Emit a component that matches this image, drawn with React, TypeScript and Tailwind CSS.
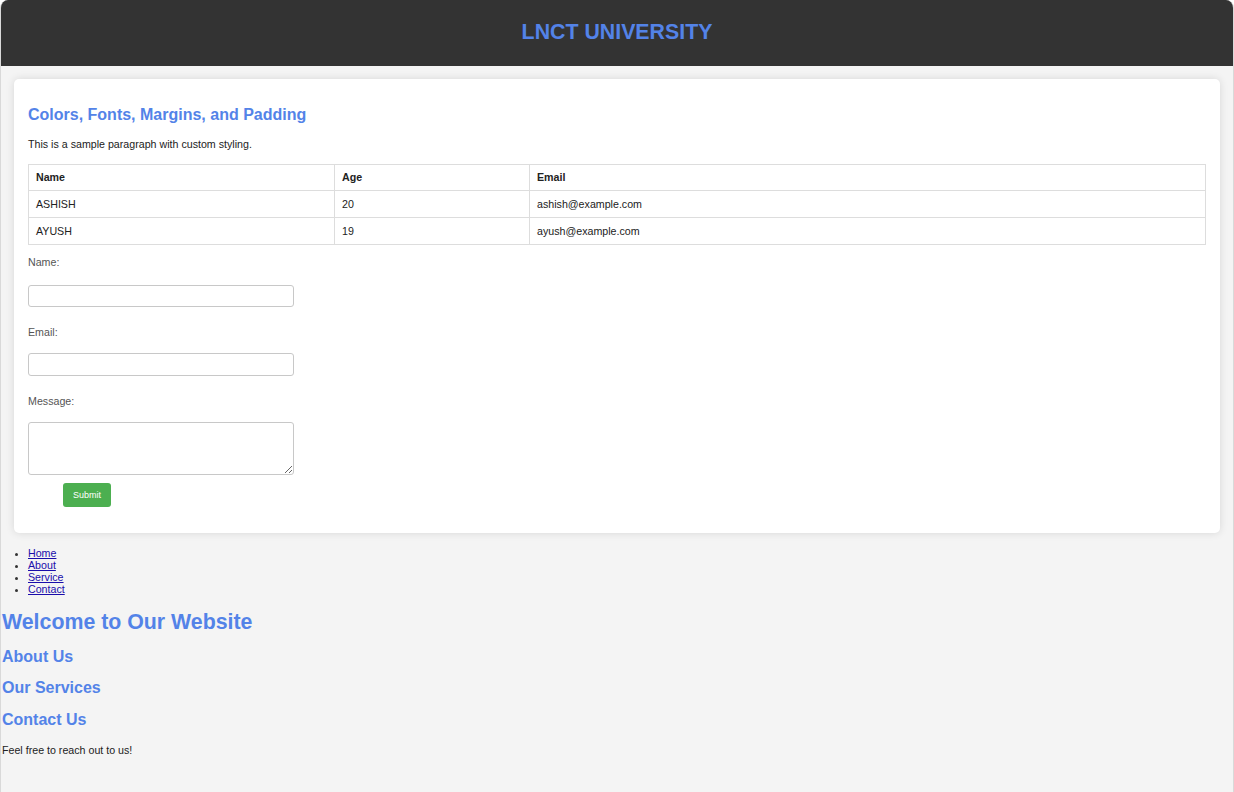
import React from "react";

const rows = [
  { name: "ASHISH", age: 20, email: "ashish@example.com" },
  { name: "AYUSH", age: 19, email: "ayush@example.com" },
];

const links = ["Home", "About", "Service", "Contact"];

export default function App() {
  return (
    <div
      className="min-h-[792px] bg-[#f4f4f4] border-x border-[#d9d9d9] rounded-t-[8px] overflow-hidden text-[10.67px] leading-[13px] text-[#222]"
      style={{ fontFamily: '"Liberation Sans", Arial, sans-serif' }}
    >
      <header className="h-[66px] bg-[#333333] flex items-center justify-center">
        <h1 className="text-[21.33px] leading-[24px] font-bold text-[#5383e8] -mt-[3px]">LNCT UNIVERSITY</h1>
      </header>

      <main className="mx-[13px] mt-[13px] bg-white rounded-[5px] shadow-[0_0_8px_rgba(0,0,0,0.12)] px-[14px] pt-[26px] pb-[26px]">
        <h2 className="text-[16px] leading-[19px] font-bold text-[#5383e8]">Colors, Fonts, Margins, and Padding</h2>
        <p className="mt-[14px]">This is a sample paragraph with custom styling.</p>

        <table className="mt-[13px] w-full border-collapse text-[#222]">
          <thead>
            <tr>
              <th className="w-[306px] border border-[#dddddd] px-[7px] py-[6px] text-left font-bold">Name</th>
              <th className="w-[195px] border border-[#dddddd] px-[7px] py-[6px] text-left font-bold">Age</th>
              <th className="border border-[#dddddd] px-[7px] py-[6px] text-left font-bold">Email</th>
            </tr>
          </thead>
          <tbody>
            {rows.map((r) => (
              <tr key={r.name}>
                <td className="border border-[#dddddd] px-[7px] py-[6.5px]">{r.name}</td>
                <td className="border border-[#dddddd] px-[7px] py-[6.5px]">{r.age}</td>
                <td className="border border-[#dddddd] px-[7px] py-[6.5px]">{r.email}</td>
              </tr>
            ))}
          </tbody>
        </table>

        <form className="flex flex-col items-start" onSubmit={(e) => e.preventDefault()}>
          <label className="mt-[11px] text-[#555]">Name:</label>
          <input type="text" className="mt-[16px] w-[266px] h-[22px] border border-[#c8c8c8] rounded-[3px] bg-white" />
          <label className="mt-[19px] text-[#555]">Email:</label>
          <input type="email" className="mt-[14px] w-[266px] h-[23px] border border-[#c8c8c8] rounded-[3px] bg-white" />
          <label className="mt-[19px] text-[#555]">Message:</label>
          <textarea className="mt-[14px] w-[266px] h-[53px] border border-[#c8c8c8] rounded-[3px] bg-white resize" />
          <button
            type="submit"
            className="mt-[8px] ml-[35px] w-[48px] h-[24px] bg-[#4caf50] text-white text-[9px] rounded-[3px]"
          >
            Submit
          </button>
        </form>
      </main>

      <ul className="mt-[14px] pl-[27px] list-disc text-[10.67px] leading-[12px]">
        {links.map((l) => (
          <li key={l} className="marker:text-[#333]">
            <a href="#" className="text-[#1a0dab] underline">
              {l}
            </a>
          </li>
        ))}
      </ul>

      <div className="pl-[1px]">
        <h1 className="mt-[15px] text-[21.33px] leading-[24px] font-bold text-[#5383e8]">Welcome to Our Website</h1>
        <h2 className="mt-[13px] text-[16px] leading-[19px] font-bold text-[#5383e8]">About Us</h2>
        <h2 className="mt-[12px] text-[16px] leading-[19px] font-bold text-[#5383e8]">Our Services</h2>
        <h2 className="mt-[13px] text-[16px] leading-[19px] font-bold text-[#5383e8]">Contact Us</h2>
        <p className="mt-[15px]">Feel free to reach out to us!</p>
      </div>
    </div>
  );
}
